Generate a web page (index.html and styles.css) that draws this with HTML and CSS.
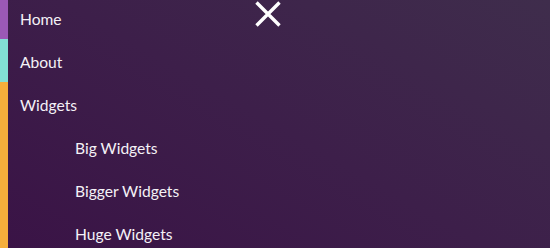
FILE: index.html
```html
<!DOCTYPE html>
<html>
<head>
<meta charset="utf-8">
<link rel="stylesheet" href="styles.css">
</head>
<body>
<div class="page">
  <nav class="menu">
    <ul class="items">
      <li class="item item-home"><a class="link">Home</a></li>
      <li class="item item-about"><a class="link">About</a></li>
      <li class="item item-widgets"><a class="link">Widgets</a>
        <ul class="sub">
          <li><a class="link sublink">Big Widgets</a></li>
          <li><a class="link sublink">Bigger Widgets</a></li>
          <li><a class="link sublink">Huge Widgets</a></li>
        </ul>
      </li>
    </ul>
  </nav>
  <button class="close" aria-label="Close">
    <svg width="26" height="26" viewBox="0 0 26 26"><path d="M1.5 1.5 L24.5 24.5 M24.5 1.5 L1.5 24.5" stroke="#fff" stroke-width="3.4" fill="none"/></svg>
  </button>
</div>
</body>
</html>
```
FILE: styles.css
```css
html, body {
  margin: 0;
  padding: 0;
  height: 100%;
  overflow: hidden;
}
body {
  background: linear-gradient(30deg, #3a1346 0%, #3d1f4a 50%, #3f2d4c 100%);
  font-family: Lato, "Noto Sans", sans-serif;
}
.page {
  position: relative;
  height: 100%;
}
.menu {
  margin-top: -4px;
}
.items, .sub {
  list-style: none;
  margin: 0;
  padding: 0;
}
.item {
  border-left: 8px solid #9b59b6;
}
.item-home { border-left-color: #9b59b6; }
.item-about { border-left-color: #82dfd5; }
.item-widgets { border-left-color: #f5ae3b; }
.link {
  display: flex;
  align-items: center;
  box-sizing: border-box;
  height: 43px;
  padding-top: 2px;
  padding-left: 12px;
  color: #f4f1f6;
  font-size: 15.6px;
  text-decoration: none;
}
.sublink {
  padding-left: 67px;
}
.close {
  position: absolute;
  left: 255px;
  top: 5px;
  width: 26px;
  height: 26px;
  padding: 0;
  border: 0;
  background: transparent;
  display: flex;
}
```
